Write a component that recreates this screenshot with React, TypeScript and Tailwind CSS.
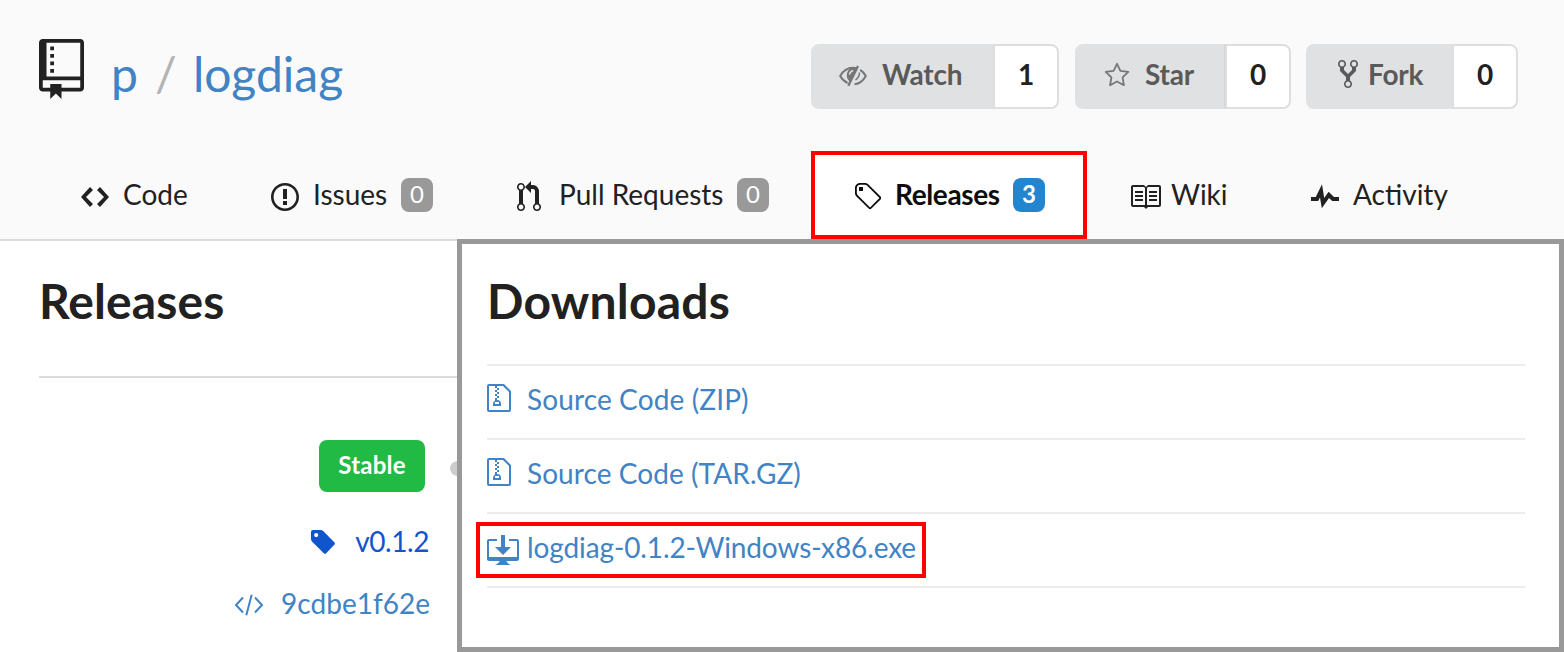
import React from "react";

type IconProps = { vb: string; d: string; className: string };
const Icon = ({ vb, d, className }: IconProps) => (
  <svg viewBox={vb} className={"shrink-0 " + className} fill="currentColor" aria-hidden="true">
    <path fillRule="evenodd" d={d} />
  </svg>
);

const P = {
  repo: "M4 9H3V8h1v1zm0-3H3v1h1V6zm0-2H3v1h1V4zm0-2H3v1h1V2zm8-1v12c0 .55-.45 1-1 1H6v2l-1.5-1.5L3 16v-2H1c-.55 0-1-.45-1-1V1c0-.55.45-1 1-1h10c.55 0 1 .45 1 1zm-1 10H1v2h2v-1h3v1h5v-2zm0-10H2v9h9V1z",
  code: "M9.5 3L8 4.5 11.5 8 8 11.5 9.5 13 14 8 9.5 3zm-5 0L0 8l4.5 5L6 11.5 2.5 8 6 4.5 4.5 3z",
  issue: "M7 2.3c3.14 0 5.7 2.56 5.7 5.7s-2.56 5.7-5.7 5.7A5.71 5.71 0 0 1 1.3 8c0-3.14 2.56-5.7 5.7-5.7zM7 1C3.14 1 0 4.14 0 8s3.14 7 7 7 7-3.14 7-7-3.14-7-7-7zm1 3H6v5h2V4zm0 6H6v2h2v-2z",
  pull: "M11 11.28V5c-.03-.78-.34-1.47-.94-2.06C9.46 2.35 8.78 2.03 8 2H7V0L4 3l3 3V4h1c.27.02.48.11.69.31.21.2.3.42.31.69v6.28A1.993 1.993 0 0 0 10 15a1.993 1.993 0 0 0 1-3.72zm-1 2.92c-.66 0-1.2-.55-1.2-1.2 0-.65.55-1.2 1.2-1.2.65 0 1.2.55 1.2 1.2 0 .65-.55 1.2-1.2 1.2zM4 3c0-1.11-.89-2-2-2a1.993 1.993 0 0 0-1 3.72v6.56A1.993 1.993 0 0 0 2 15a1.993 1.993 0 0 0 1-3.72V4.72c.59-.34 1-.98 1-1.72zm-.8 10c0 .66-.55 1.2-1.2 1.2-.65 0-1.2-.55-1.2-1.2 0-.65.55-1.2 1.2-1.2.65 0 1.2.55 1.2 1.2zM2 4.2C1.34 4.2.8 3.65.8 3c0-.65.55-1.2 1.2-1.2.65 0 1.2.55 1.2 1.2 0 .65-.55 1.2-1.2 1.2z",
  tag: "M7.73 1.73C7.26 1.26 6.62 1 5.96 1H3.5C2.13 1 1 2.13 1 3.5v2.47c0 .66.27 1.3.73 1.77l6.06 6.06c.39.39 1.02.39 1.41 0l4.59-4.59a.996.996 0 0 0 0-1.41L7.73 1.73zM2.38 7.09c-.31-.3-.47-.7-.47-1.13V3.5c0-.88.72-1.59 1.59-1.59h2.47c.42 0 .83.16 1.13.47l6.14 6.13-4.73 4.73-6.13-6.15zM3.01 3h2v2H3V3h.01z",
  book: "M3 5h4v1H3V5zm0 3h4V7H3v1zm0 2h4V9H3v1zm11-5h-4v1h4V5zm0 2h-4v1h4V7zm0 2h-4v1h4V9zm2-6v9c0 .55-.45 1-1 1H9.5l-1 1-1-1H2c-.55 0-1-.45-1-1V3c0-.55.45-1 1-1h5.5l1 1 1-1H15c.55 0 1 .45 1 1zm-8 .5L7.5 3H2v9h6V3.5zm7-.5H9.5l-.5.5V12h6V3z",
  pulse: "M11.5 8L8.8 5.4 6.6 8.5 5.5 1.6 2.38 8H0v2h3.6l.9-1.8.9 5.4L9 8.5l1.6 1.5H14V8h-2.5z",
  zip: "M8.5 1H1a1 1 0 0 0-1 1v12a1 1 0 0 0 1 1h10a1 1 0 0 0 1-1V4.5L8.5 1zM11 14H1V2h3v1h1V2h3l3 3v9zM5 4V3h1v1H5zM4 4h1v1H4V4zm1 2V5h1v1H5zM4 6h1v1H4V6zm1 2V7h1v1H5zM4 9.28A2 2 0 0 0 3 11v1h4v-1a2 2 0 0 0-2-2V8H4v1.28zM6 10v1H4v-1h2z",
  download: "M4 6h3V0h2v6h3l-4 4-4-4zm11-4h-4v1h4v8H1V3h4V2H1c-.55 0-1 .45-1 1v9c0 .55.45 1 1 1h5.34c-.25.61-.86 1.39-2.34 2h8c-1.48-.61-2.09-1.39-2.34-2H15c.55 0 1-.45 1-1V3c0-.55-.45-1-1-1z",
  fork: "M8 1a1.993 1.993 0 0 0-1 3.72V6L5 8 3 6V4.72A1.993 1.993 0 0 0 2 1a1.993 1.993 0 0 0-1 3.72V6.5l3 3v1.78A1.993 1.993 0 0 0 5 15a1.993 1.993 0 0 0 1-3.72V9.5l3-3V4.72A1.993 1.993 0 0 0 8 1zM2 4.2C1.34 4.2.8 3.65.8 3c0-.65.55-1.2 1.2-1.2.65 0 1.2.55 1.2 1.2 0 .65-.55 1.2-1.2 1.2zm3 10c-.66 0-1.2-.55-1.2-1.2 0-.65.55-1.2 1.2-1.2.65 0 1.2.55 1.2 1.2 0 .65-.55 1.2-1.2 1.2zm3-10c-.66 0-1.2-.55-1.2-1.2 0-.65.55-1.2 1.2-1.2.65 0 1.2.55 1.2 1.2 0 .65-.55 1.2-1.2 1.2z",
  tagSolid: "M2 0H9.5Q11 0 12.2 1.1L23.3 12.2Q24.6 13.5 23.3 14.8L15.2 23.2Q14 24.4 12.8 23.2L1.2 11.8Q0 10.6 0 9V2Q0 0 2 0zM5.2 3A2.1 2.1 0 1 0 5.2 7.2A2.1 2.1 0 1 0 5.2 3z",
};

const EyeSlash = () => (
  <svg viewBox="0 0 28 22" className="h-[22px] w-7 shrink-0" fill="none" stroke="currentColor" strokeWidth="2">
    <path d="M17.5 3.2Q15.8 2.8 14 2.8C8.5 2.8 4 6 1.2 11C3 14.2 5.5 16.6 8.5 18M15.5 19.2C20.5 18.7 24.3 15.600 26.800 11C25.400 8.400 23.600 6.300 21.200 4.800" />
    <path d="M19 1L9.300 20.800" strokeWidth="2.400" />
    <path d="M20.500 7.500Q20.500 12 16.500 15" strokeWidth="1.500" />
    <path fillRule="evenodd" d="M14.5 3C10 3 7.500 7 7.800 11C8 13.500 9 15 10.500 16L12 16L17.500 4ZM14.200 5.200Q10.800 6 10.300 9.600" fill="currentColor" stroke="none" />
    <path d="M14.200 5.600Q10.900 6.200 10.400 9.600" stroke="#e0e1e2" strokeWidth="1.200" />
  </svg>
);
const Star = () => (
  <svg viewBox="0 0 26 25" className="h-[25px] w-[26px] shrink-0" fill="none" stroke="currentColor" strokeWidth="1.8" strokeLinejoin="round">
    <path d="M13 1.8L16.4 8.8L24.3 9.9L18.6 15.4L19.9 23.2L13 19.5L6.1 23.2L7.4 15.4L1.7 9.9L9.6 8.8Z" />
  </svg>
);
const CodeSlash = () => (
  <svg viewBox="0 0 30 22" className="mt-[2px] h-[22px] w-[30px] shrink-0" fill="none" stroke="currentColor" strokeWidth="2">
    <path d="M9 3.500L2 11L9 18.500M21 3.500L28 11L21 18.500M17.700 0.700L12.300 21.300" />
  </svg>
);

type ActionProps = { icon: React.ReactNode; label: string; count: number; box: string; main: string; pad: string };
const Action = ({ icon, label, count, box, main, pad }: ActionProps) => (
  <div className={"flex h-[65px] text-[28px] font-bold tracking-[-0.2px] " + box}>
    <div className={"flex items-center rounded-l-lg bg-[#e0e1e2] pb-[5px] text-[#5a5a5a] " + main + " " + pad}>
      {icon}
      <span className="leading-8">{label}</span>
    </div>
    <div className="flex flex-1 items-center justify-center rounded-r-lg border-2 border-[#dededf] bg-white pb-[6px] text-[#212121]">{count}</div>
  </div>
);

const Badge = ({ n, className }: { n: number; className: string }) => (
  <span className={"flex h-[34px] w-8 shrink-0 items-center justify-center rounded-lg pb-[3px] text-[24px] text-white " + className}>{n}</span>
);

export default function App() {
  return (
    <div className="flex h-[652px] w-[1564px] flex-col overflow-hidden bg-white font-['Lato',sans-serif] text-[28px] text-[#212121]">
      <header className="flex h-[241px] shrink-0 flex-col border-b-2 border-[#dcdcdc] bg-[#fafafa]">
        <div className="flex h-[151px] items-start pl-[39px]">
          <Icon vb="0 0 12 16" d={P.repo} className="mt-[39px] h-[60px] w-[45px]" />
          <h1 className="ml-[27px] mt-[44px] flex w-[700px] text-[48px] leading-[60px] text-[#4183c4]">
            <span>p</span>
            <span className="ml-[17px] w-[38px] text-[#b3b3b3]">/</span>
            <span>logdiag</span>
          </h1>
          <div className="mt-[44px] flex">
            <Action icon={<span className="mt-1 text-[#767676]"><EyeSlash /></span>} label="Watch" count={1} box="w-[248px]" main="w-[182px]" pad="pl-7 gap-[15px]" />
            <Action icon={<span className="text-[#767676]"><Star /></span>} label="Star" count={0} box="ml-4 w-[216px]" main="w-[150px] border-r border-[#d4d5d6]" pad="pl-[29px] gap-[15px]" />
            <Action icon={<Icon vb="0 0 10 16" d={P.fork} className="h-8 w-5" />} label="Fork" count={0} box="ml-[15px] w-[212px]" main="w-[146px]" pad="pl-8 gap-[10px]" />
          </div>
        </div>
        <nav className="flex h-[88px] items-center whitespace-nowrap leading-9">
          <div className="flex w-[190px] items-center gap-[14px] pl-[81px]">
            <Icon vb="0 0 14 16" d={P.code} className="mt-1 h-8 w-7" />
            <span className="mb-[2px]">Code</span>
          </div>
          <div className="ml-[81px] flex w-[162px] items-center">
            <Icon vb="0 0 14 16" d={P.issue} className="mt-1 h-8 w-7" />
            <span className="mb-[2px] ml-[14px] w-[88px]">Issues</span>
            <Badge n={0} className="bg-[#999999]" />
          </div>
          <div className="ml-[84px] flex w-[252px] items-center">
            <Icon vb="0 0 12 16" d={P.pull} className="mt-1 h-8 w-6" />
            <span className="mb-[2px] ml-[18px] w-[178px]">Pull Requests</span>
            <Badge n={0} className="bg-[#999999]" />
          </div>
          <div className="ml-[42px] flex h-[88px] w-[276px] items-center border-4 border-[#ff0000] bg-white pl-[38px] font-bold text-[#0d0d0d]">
            <Icon vb="0 0 14 16" d={P.tag} className="mt-1 h-8 w-7" />
            <span className="mb-[2px] ml-[14px] w-[118px] tracking-[-0.38px]">Releases</span>
            <Badge n={3} className="bg-[#2185d0]" />
          </div>
          <div className="ml-[42px] flex w-[182px] items-center gap-[10px]">
            <Icon vb="0 0 16 16" d={P.book} className="mt-1 size-8" />
            <span className="mb-[2px]">Wiki</span>
          </div>
          <div className="flex items-center gap-[14px]">
            <Icon vb="0 0 14 16" d={P.pulse} className="mt-1 h-8 w-7" />
            <span className="mb-[2px]">Activity</span>
          </div>
        </nav>
      </header>

      <main className="-mt-[2px] flex h-[413px]">
        <aside className="flex w-[457px] shrink-0 flex-col overflow-hidden pt-[2px]">
          <h2 className="ml-[39px] flex h-[137px] shrink-0 border-b-2 border-[#dcdcdc] pt-[30px] text-[48px] font-bold leading-[60px] tracking-[0.1px]">Releases</h2>
          <div className="ml-[319px] mt-[62px] flex items-center">
            <span className="flex h-[52px] w-[106px] shrink-0 items-center justify-center rounded-lg bg-[#21ba45] pb-[2px] text-[24px] font-bold tracking-[0.2px] text-white">Stable</span>
            <span className="ml-[25px] mt-1 size-[15px] shrink-0 rounded-full bg-[#cccccc]" />
          </div>
          <div className="mt-8 flex h-9 items-center justify-end pr-7 leading-9 text-[#1155cc]">
            <Icon vb="0 0 24 24" d={P.tagSolid} className="mr-5 size-6" />
            <span className="mb-[2px] tracking-[-0.45px]">v0.1.2</span>
          </div>
          <div className="mt-[26px] flex h-9 items-center justify-end pr-[27px] leading-9 text-[#4183c4]">
            <CodeSlash />
            <span className="mb-[2px] ml-[17px]">9cdbe1f62e</span>
          </div>
        </aside>
        <section className="flex w-[1107px] flex-col border-5 border-[#999999] bg-white pl-[25px] pr-[34px]">
          <h2 className="h-[120px] pt-[27px] text-[48px] font-bold leading-[60px] tracking-[0.2px]">Downloads</h2>
          <ul className="border-b-2 border-[#ececed] text-[#4183c4]">
            <li className="flex h-[74px] items-center border-t-2 border-[#ececed]">
              <Icon vb="0 0 12 16" d={P.zip} className="mb-2 h-8 w-6" />
              <span className="mb-[6px] ml-4 tracking-[0.12px]">Source Code (ZIP)</span>
            </li>
            <li className="flex h-[74px] items-center border-t-2 border-[#ececed]">
              <Icon vb="0 0 12 16" d={P.zip} className="mb-2 h-8 w-6" />
              <span className="mb-[6px] ml-4 tracking-[0.07px]">Source Code (TAR.GZ)</span>
            </li>
            <li className="flex h-[74px] items-center border-t-2 border-[#ececed]">
              <div className="-ml-[11px] flex h-14 w-[450px] items-center border-4 border-[#ff0000] pl-[7px]">
                <Icon vb="0 0 16 16" d={P.download} className="mt-[2px] size-8" />
                <span className="mb-[6px] ml-2 whitespace-nowrap tracking-[-0.11px]">logdiag-0.1.2-Windows-x86.exe</span>
              </div>
            </li>
          </ul>
        </section>
      </main>
    </div>
  );
}
